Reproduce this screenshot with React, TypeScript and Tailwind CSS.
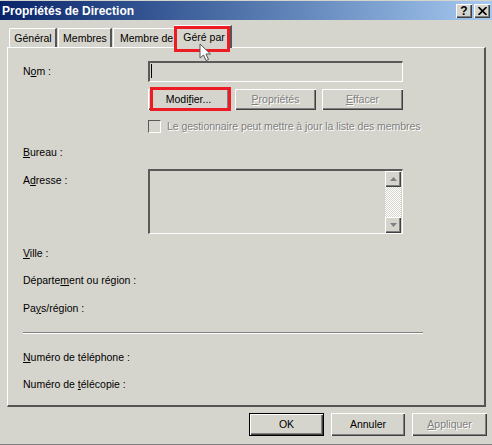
const raised = 'shadow-[inset_1px_1px_0_#fff,inset_-1px_-1px_0_#404040,inset_-2px_-2px_0_#808080]';
const sunken = 'border-t-2 border-l-2 border-t-[#5a5a5a] border-l-[#5a5a5a] border-b border-r border-b-white border-r-white';
const disabled = 'text-[#808080] [text-shadow:1px_1px_0_#fff]';

function Tab({ label, width }: { label: string; width: string }) {
  return (
    <div className={`${width} h-[19px] mr-px pl-px border-t border-l border-white rounded-tl-[2px] border-r-2 border-r-[#555] flex items-center justify-center`}>
      {label}
    </div>
  );
}

function Field({ children, height }: { children: React.ReactNode; height: string }) {
  return <div className={`${height} flex items-center`}>{children}</div>;
}

function Btn({ children, width, off }: { children: React.ReactNode; width: string; off?: boolean }) {
  return (
    <div className={`${width} h-[21px] flex items-center justify-center ${raised} ${off ? disabled : ''}`}>
      {children}
    </div>
  );
}

export default function App() {
  return (
    <div className="w-[492px] h-[445px] overflow-hidden bg-[#d6d5cd] text-black text-[10.5px] leading-none font-['Liberation_Sans',Arial,sans-serif] border-b border-b-[#808080] flex flex-col">
      <div className="h-[19px] mt-px flex items-center justify-between pl-[2px] pr-[2px] bg-gradient-to-r from-[#0a246a] to-[#a6caf0]">
        <span className="text-white font-bold text-[12px]">Propriétés de Direction</span>
        <div className="flex gap-[2px]">
          <div className={`w-[16px] h-[14px] bg-[#d6d5cd] flex items-center justify-center font-bold text-[12px] ${raised}`}>?</div>
          <div className={`w-[16px] h-[14px] bg-[#d6d5cd] flex items-center justify-center ${raised}`}>
            <svg width="9" height="8" viewBox="0 0 9 8" className="block">
              <path d="M0.5 0 L8.5 8 M8.5 0 L0.5 8" stroke="#000" strokeWidth="1.6" />
            </svg>
          </div>
        </div>
      </div>

      <div className="h-[27px] pl-[9px] flex items-end">
        <Tab label="Général" width="w-[48px]" />
        <Tab label="Membres" width="w-[54px]" />
        <div className="w-[61px] h-[19px] border-t border-l border-white flex items-center pl-[6px] whitespace-nowrap">Membre de</div>
        <div className="relative z-10 w-[58px] h-[23px] -mb-px pl-[3px] border-t border-l border-white border-r-2 border-r-[#555] bg-[#d6d5cd] flex items-center justify-center">
          Géré par
          <div className="absolute left-[-1px] top-[0px] w-[56px] h-[26px] border-[3px] border-[#ed1c24]" />
          <svg width="14" height="20" viewBox="0 0 14 20" className="absolute left-[24px] top-[17px]">
            <path d="M1 1 L1 15 L4.5 12 L7 17.5 L9.5 16.5 L7 11 L11.5 11 Z" fill="#fff" stroke="#555" strokeWidth="1" />
          </svg>
        </div>
      </div>

      <div className="mx-[7px] h-[360px] w-[479px] pl-[15px] pt-[13px] border-t border-l border-white border-r-2 border-b-2 border-r-[#555] border-b-[#555]">
        <div className="flex h-[21px] items-center">
          <div className="w-[125px]">N<u>o</u>m :</div>
          <div className={`w-[255px] h-[21px] pl-px pt-px ${sunken}`}>
            <div className="w-px h-[14px] bg-black" />
          </div>
        </div>

        <div className="relative mt-[7px] ml-[125px] flex gap-[6px]">
          <Btn width="w-[81px]">Modi<u>f</u>ier...</Btn>
          <Btn width="w-[81px]" off><span><u>P</u>ropriétés</span></Btn>
          <Btn width="w-[81px]" off><span><u>E</u>ffacer</span></Btn>
          <div className="absolute left-[2px] top-[-2px] w-[81px] h-[24px] border-[3px] border-[#ed1c24]" />
        </div>

        <div className="mt-[9px] ml-[125px] h-[14px] flex items-center gap-[6px]">
          <div className="w-[13px] h-[13px] border-t border-l border-[#5a5a5a] border-b border-r border-b-white border-r-white" />
          <span className={`whitespace-nowrap tracking-[-0.05px] ${disabled}`}>Le <u>g</u>estionnaire peut mettre à jour la liste des membres</span>
        </div>

        <Field height="h-[12px] mt-[13px]"><span><u>B</u>ureau :</span></Field>

        <div className="flex mt-[11px] h-[65px]">
          <div className="w-[125px] pt-[6px]">A<u>d</u>resse :</div>
          <div className={`w-[255px] h-[65px] flex justify-end pr-px ${sunken}`}>
            <div className="w-[16px] flex flex-col">
              <div className={`h-[16px] flex items-center justify-center ${raised}`}>
                <svg width="7" height="4" viewBox="0 0 7 4"><path d="M3.5 0 L7 4 L0 4 Z" fill="#808080" /></svg>
              </div>
              <div className="flex-1 bg-[repeating-conic-gradient(#fff_0_25%,#d6d5cd_0_50%)] bg-[length:2px_2px]" />
              <div className={`h-[16px] flex items-center justify-center ${raised}`}>
                <svg width="7" height="4" viewBox="0 0 7 4"><path d="M0 0 L7 0 L3.5 4 Z" fill="#808080" /></svg>
              </div>
            </div>
          </div>
        </div>

        <Field height="h-[12px] mt-[13px]"><span><u>V</u>ille :</span></Field>
        <Field height="h-[12px] mt-[15px]"><span>Départe<u>m</u>ent ou région :</span></Field>
        <Field height="h-[12px] mt-[16px]"><span>Pa<u>y</u>s/région :</span></Field>

        <div className="mt-[18px] w-[400px] h-[2px] border-t border-t-[#808080] border-b border-b-white" />

        <Field height="h-[12px] mt-[17px]"><span><u>N</u>uméro de téléphone :</span></Field>
        <Field height="h-[12px] mt-[15px]"><span>Numéro de <u>t</u>élécopie :</span></Field>
      </div>

      <div className="mt-[6px] pl-[249px] flex gap-[7px]">
        <div className="w-[75px] h-[23px] border border-black">
          <div className={`h-full flex items-center justify-center ${raised}`}>OK</div>
        </div>
        <div className={`w-[74px] h-[23px] flex items-center justify-center ${raised}`}>Annuler</div>
        <div className={`w-[75px] h-[23px] flex items-center justify-center ${raised} ${disabled}`}><span><u>A</u>ppliquer</span></div>
      </div>
    </div>
  );
}
